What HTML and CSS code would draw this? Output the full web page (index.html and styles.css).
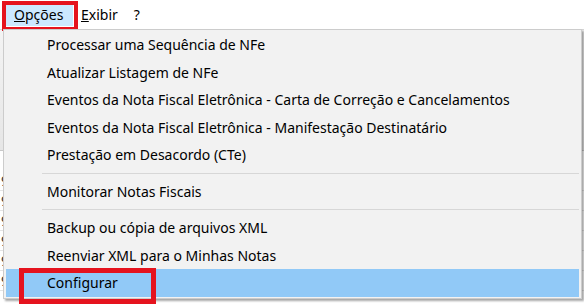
FILE: index.html
```html
<!DOCTYPE html>
<html lang="pt-BR">

<head>
    <meta charset="UTF-8">
    <meta name="viewport" content="width=device-width, initial-scale=1.0">
    <title>Opções</title>
    <link rel="stylesheet" href="styles.css">
</head>

<body>
    <div class="menubar">
        <div class="menubar-item active"><u>O</u>pções</div>
        <div class="menubar-item"><u>E</u>xibir</div>
        <div class="menubar-item">?</div>
    </div>

    <!-- janela por trás do menu -->
    <div class="window">
        <div class="toolbar"></div>
        <div class="grid">
            <div class="grid-row">9</div>
            <div class="grid-row">9</div>
            <div class="grid-row">9</div>
            <div class="grid-row">9</div>
            <div class="grid-row">9</div>
            <div class="grid-row">9</div>
        </div>
    </div>

    <div class="mark mark-opcoes"></div>

    <div class="dropdown">
        <div class="item">Processar uma Sequência de NFe</div>
        <div class="item">Atualizar Listagem de NFe</div>
        <div class="item">Eventos da Nota Fiscal Eletrônica - Carta de Correção e Cancelamentos</div>
        <div class="item">Eventos da Nota Fiscal Eletrônica - Manifestação Destinatário</div>
        <div class="item">Prestação em Desacordo (CTe)</div>
        <div class="separator"></div>
        <div class="item">Monitorar Notas Fiscais</div>
        <div class="separator"></div>
        <div class="item">Backup ou cópia de arquivos XML</div>
        <div class="item">Reenviar XML para o Minhas Notas</div>
        <div class="item selected">Configurar</div>
    </div>

    <div class="mark mark-configurar"></div>
</body>

</html>
```

FILE: styles.css
```css
body{
    margin: 0;
    width: 584px;
    height: 307px;
    overflow: hidden;
    background: #fff;
    font-family: "Noto Sans", "Open Sans", sans-serif;
    font-size: 14px;
    color: #000;
    position: relative;
}

.menubar{
    display: flex;
    height: 29px;
    padding-left: 6px;
    align-items: stretch;
    background: #fff;
}
.menubar-item{
    display: flex;
    align-items: center;
    padding: 0 8px;
    margin-top: 2px;
    margin-bottom: 3px;
}
.menubar-item.active{
    background: #cce8ff;
    width: 67px;
    box-sizing: border-box;
}

.window{
    height: 278px;
    border-top: 1px solid #d9d9d9;
}
.toolbar{
    height: 120px;
    background: linear-gradient(#f4f4f4, #e6e6e6);
    border-bottom: 1px solid #c8c8c8;
}
.grid{
    padding-top: 20px;
}
.grid-row{
    height: 19px;
    line-height: 19px;
    padding-left: 1px;
    color: #333;
    border-bottom: 1px solid #e4e4e4;
}

.dropdown{
    position: absolute;
    top: 29px;
    left: 3px;
    width: 577px;
    padding: 1px 0;
    background: #f2f2f2;
    border: 1px solid #cccccc;
    box-shadow: 2px 2px 2px rgba(0, 0, 0, 0.35);
}
.item{
    height: 27.5px;
    line-height: 27.5px;
    margin: 0 2px;
    padding-left: 41px;
    white-space: nowrap;
}
.item.selected{
    background: #91c9f7;
}
.separator{
    height: 1px;
    margin: 4px 2px 4px 38px;
    background: #d7d7d7;
}

.mark{
    position: absolute;
    border: 4px solid #e5131e;
}
.mark-opcoes{
    top: 1px;
    left: 2px;
    width: 68px;
    height: 22px;
}
.mark-configurar{
    top: 268px;
    left: 19px;
    width: 127px;
    height: 26px;
    border-width: 5px;
}
```
